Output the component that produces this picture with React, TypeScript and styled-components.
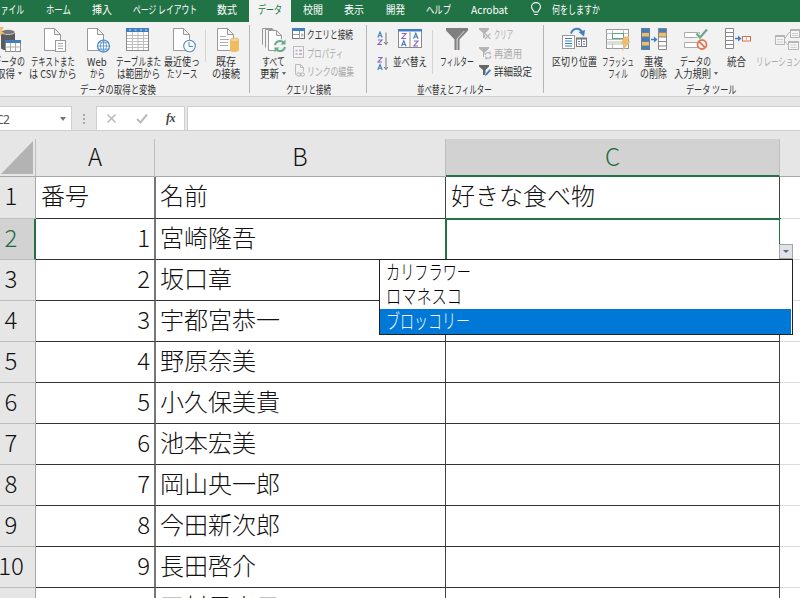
import React, { useLayoutEffect, useRef, useState } from "react";
import styled, { createGlobalStyle, css } from "styled-components";

const uiFont = `"Noto Sans CJK JP", "Noto Sans", sans-serif`;

const GlobalStyle = createGlobalStyle`
  *, *::before, *::after { box-sizing: border-box; }
  body { margin: 0; background: #e6e6e6; font-family: ${uiFont}; overflow: hidden; }
`;

/* ---------- condensed text ---------- */

const FitBox = styled.span<{ $w: number }>`
  display: block;
  flex: none;
  width: ${(p) => p.$w}px;
  white-space: nowrap;
  text-align: left;
`;

const FitInner = styled.span`
  display: inline-block;
  transform-origin: 0 50%;
`;

function Fit({ text, w }: { text: string; w: number }) {
  const ref = useRef<HTMLSpanElement>(null);
  const [scale, setScale] = useState(1);
  useLayoutEffect(() => {
    if (ref.current) setScale(w / ref.current.offsetWidth);
  }, [text, w]);
  return (
    <FitBox $w={w}>
      <FitInner ref={ref} style={{ transform: `scaleX(${scale})` }}>
        {text}
      </FitInner>
    </FitBox>
  );
}

/* ---------- window shell ---------- */

const Window = styled.div`
  width: 800px;
  height: 598px;
  overflow: hidden;
  display: flex;
  flex-direction: column;
  background: #e6e6e6;
`;

const TabBar = styled.nav`
  display: flex;
  flex: none;
  height: 22px;
  background: #217346;
`;

const Tab = styled.div<{ $w: number; $active?: boolean; $shift?: number }>`
  flex: none;
  display: flex;
  justify-content: center;
  align-items: center;
  width: ${(p) => p.$w}px;
  height: 22px;
  padding-bottom: 5px;
  margin-left: ${(p) => p.$shift ?? 0}px;
  font-size: 11px;
  line-height: 16px;
  color: ${(p) => (p.$active ? "#217346" : "#fff")};
  background: ${(p) => (p.$active ? "#f2f2f2" : "transparent")};
`;

const TellMe = styled.div`
  display: flex;
  gap: 10px;
  padding: 0 0 5px 10px;
  align-items: center;
  font-size: 11px;
  line-height: 16px;
  color: #fff;
`;

const Ribbon = styled.div`
  display: flex;
  flex: none;
  height: 75px;
  background: #f2f2f2;
  border-bottom: 1px solid #cfcfcf;
  overflow: hidden;
`;

const Group = styled.section<{ $w: number }>`
  flex: none;
  display: flex;
  flex-direction: column;
  width: ${(p) => p.$w}px;
`;

const GroupBody = styled.div<{ $pad?: number }>`
  display: flex;
  height: 60px;
  padding-left: ${(p) => p.$pad ?? 0}px;
`;

const GroupLabel = styled.div<{ $inset?: number }>`
  display: flex;
  justify-content: center;
  padding-right: ${(p) => p.$inset ?? 0}px;
  font-size: 11px;
  line-height: 14px;
  color: #333;
`;

const GroupRule = styled.div`
  flex: none;
  width: 1px;
  height: 68px;
  margin-top: 3px;
  background: #b5b5b5;
`;

const InnerRule = styled.div<{ $h: number }>`
  flex: none;
  width: 1px;
  height: ${(p) => p.$h}px;
  margin: 8px 1px 0;
  background: #d4d4d4;
`;

const BigButton = styled.div<{ $w: number; $shift?: number; $muted?: boolean }>`
  flex: none;
  display: flex;
  flex-direction: column;
  align-items: center;
  width: ${(p) => p.$w}px;
  margin-left: ${(p) => p.$shift ?? 0}px;
  padding-top: 5px;
  font-size: 11px;
  line-height: 12px;
  color: ${(p) => (p.$muted ? "#aaa" : "#333")};
`;

const IconSlot = styled.div<{ $dx?: number }>`
  width: 28px;
  height: 28px;
  margin-left: ${(p) => (p.$dx ?? 0) * 2}px;
  svg { display: block; overflow: visible; }
`;

const CaptionLine = styled.div`
  display: flex;
  align-items: center;
  height: 12px;
`;

const Caret = styled.i<{ $color?: string }>`
  margin-left: 3px;
  border: 2.5px solid transparent;
  border-top: 3px solid ${(p) => p.$color ?? "#666"};
  border-bottom: 0;
`;

const SmallList = styled.div`
  display: flex;
  flex-direction: column;
  padding-top: 3px;
`;

const SmallButton = styled.div<{ $muted?: boolean }>`
  display: flex;
  align-items: center;
  gap: 1px;
  height: 18.5px;
  font-size: 11px;
  line-height: 14px;
  color: ${(p) => (p.$muted ? "#aaa" : "#333")};
  svg { flex: none; display: block; }
`;

const SortColumn = styled.div`
  display: flex;
  flex-direction: column;
  gap: 10px;
  width: 22px;
  padding: 9px 0 0 10px;
  svg { display: block; }
`;

/* ---------- ribbon icons (28 x 28 canvas) ---------- */

const I = ({ children }: { children: React.ReactNode }) => (
  <svg width="28" height="28" viewBox="0 0 28 28" fill="none">
    {children}
  </svg>
);

const Page = ({ x = 3.5 }: { x?: number }) => (
  <path d={`M${x} 1.5h10l6 6v16h-16z M${x + 10} 1.5v6h6`} fill="#fff" stroke="#999" />
);

const GetDataIcon = () => (
  <I>
    <path d="M6 5v16c0 3 14 3 14 0V5z" fill="#5b5b5b" />
    <ellipse cx="13" cy="5" rx="7" ry="2.5" fill="#777" stroke="#f2f2f2" strokeWidth=".7" />
    <path d="M1 0h8l-3 5h3l-9 9 2-7h-3z" fill="#f0bd6c" />
    <rect x="10.5" y="13.5" width="15" height="11" fill="#fff" stroke="#8a8a8a" />
    <path d="M10 13h16v3H10z" fill="#3f7fc1" />
    <path d="M10 20h16M15.5 16v9M20.5 16v9" stroke="#aaa" />
  </I>
);
const TextIcon = () => (
  <I>
    <Page />
    <rect x="14.5" y="13.5" width="10" height="11" fill="#fff" stroke="#999" />
    <path d="M17 16.5h5M17 19h5M17 21.500h5" stroke="#aaa" />
  </I>
);
const WebIcon = () => (
  <I>
    <Page />
    <circle cx="19.5" cy="19" r="6" fill="#fff" stroke="#4f8ac6" strokeWidth="1.2" />
    <path d="M13.5 19h12M19.5 13v12M14.5 15.800h10M14.500 22.200h10M19.500 13c-4 3-4 9 0 12M19.500 13c4 3 4 9 0 12" stroke="#4f8ac6" strokeWidth=".8" />
  </I>
);
const TableIcon = () => (
  <I>
    <rect x="2.5" y="1.5" width="22" height="22" fill="#fff" stroke="#8a8a8a" />
    <path d="M2 1h23v4H2z" fill="#3f7fc1" />
    <path d="M5 3h2M10.500 3h2M16 3h2M21 3h2" stroke="#cfe0f2" />
    <path d="M8.500 5v18M14 5v18M19.500 5v18M3 8.500h21M3 11.500h21M3 14.500h21M3 17.500h21M3 20.500h21" stroke="#bdbdbd" />
  </I>
);
const RecentIcon = () => (
  <I>
    <Page />
    <circle cx="19.500" cy="19" r="5.800" fill="#fff" stroke="#4f8ac6" strokeWidth="1.100" />
    <path d="M19 15v4.500h4" stroke="#4f8ac6" />
  </I>
);
const ExistingIcon = () => (
  <I>
    <Page />
    <path d="M6 9.500h6M6 12.500h9M6 15.500h8M6 18.500h8" stroke="#aaa" />
    <path d="M16 13v10c0 2.500 9 2.500 9 0V13z" fill="#efbc62" />
    <ellipse cx="20.500" cy="13" rx="4.500" ry="2" fill="#f6d192" stroke="#e0a84a" strokeWidth=".6" />
  </I>
);
const RefreshIcon = () => (
  <I>
    <path d="M2.500 17.500v-16h10" stroke="#999" />
    <path d="M5.500 20.500v-18h8" stroke="#999" />
    <path d="M8.500 3.500h8l5 5v15h-13z M16.500 3.500v5h5" fill="#fff" stroke="#999" />
    <circle cx="20" cy="19" r="7" fill="#f2f2f2" />
    <path d="M15 18a5 5 0 0 1 8.500-2.500M25 20a5 5 0 0 1-8.500 2.500" stroke="#6aab8b" strokeWidth="2" />
    <path d="M25.500 12.500v5h-5zM14.500 25.500v-5h5z" fill="#6aab8b" />
  </I>
);
const SortDialogIcon = () => (
  <I>
    <rect x="2.500" y="2.500" width="23" height="18" fill="#fff" stroke="#8a8a8a" />
    <path d="M2 2h24v2.500H2z" fill="#3f7fc1" />
    <path d="M14 5v16" stroke="#8a8a8a" />
    <path d="M5.800 6.500h4.200l-4.200 5h4.200M17.800 14h4.200l-4.200 5h4.200" stroke="#8c62b5" strokeWidth="1.100" />
    <path d="M5.500 19.300l2.300-5.500 2.300 5.500M6.300 17.500h3M17.500 11.800l2.300-5.500 2.300 5.500M18.300 10h3" stroke="#3f7fc1" strokeWidth="1.100" />
  </I>
);
const FunnelIcon = () => (
  <I>
    <path d="M3 1h22v2.500l-8.500 9V23h-5V12.500L3 3.500z" fill="#7f7f7f" />
    <path d="M13.500 12v11h1.300V12l7-8h-1z" fill="#cfcfcf" />
  </I>
);
const TextToColumnsIcon = () => (
  <I>
    <path d="M10 6.500C12 .5 19 .5 21 5" stroke="#3f7fc1" strokeWidth="2" />
    <path d="M17.500 5l6.500-2-1 6.500z" fill="#3f7fc1" />
    <rect x="1.500" y="8.500" width="12" height="13" fill="#fff" stroke="#999" />
    <path d="M4 11.500h7M4 14h7M4 16.500h7M4 19h7" stroke="#3f7fc1" />
    <rect x="15.500" y="11.500" width="10" height="8" fill="#fff" stroke="#777" />
    <path d="M15 11.500h11" stroke="#777" strokeWidth="2" />
    <path d="M20.500 12v7" stroke="#777" />
    <path d="M17 14.500h2M17 17h2M22 14.500h2M22 17h2" stroke="#3f7fc1" />
  </I>
);
const FlashFillIcon = () => (
  <I>
    <rect x="2.500" y="2.500" width="22" height="19" fill="#fff" stroke="#999" />
    <path d="M2.500 6.500h22M2.500 12.500h22M2.500 17h22M8.500 2.500v4M19.500 2.500v19M8.500 17v4.500" stroke="#bbb" />
    <rect x="8.500" y="6.500" width="11" height="5" fill="#fff" stroke="#5aa583" />
    <path d="M3.500 14h15v2.500h-15z" fill="#ddd" />
    <path d="M20 9.500h5.500l-2 5h3l-8.500 10 2.500-7.500h-3.500z" fill="#f0bd6c" />
  </I>
);
const DuplicatesIcon = () => (
  <I>
    <path d="M1 1h9v22H1zM18 1h9v5h-9z" fill="#3f7fc1" />
    <path d="M2 6h7v4H2zM2 15h7v4H2zM19 6h7v4h-7z" fill="#f0bd6c" />
    <path d="M1.500 1.500h8v21h-8zM1.500 5.500h8M1.500 10h8M1.500 14.500h8M1.500 19h8" stroke="#6b7d93" />
    <path d="M18.500 10.500h8v12h-8z" fill="#fff" />
    <path d="M18.500 1.500h8v21h-8zM18.500 5.500h8M18.500 10h8M18.500 14.500h8M18.500 19h8" stroke="#888" />
    <path d="M11 12.500h4" stroke="#3f7fc1" strokeWidth="1.500" />
    <path d="M14 9.500l3.500 3-3.500 3z" fill="#3f7fc1" />
  </I>
);
const ValidationIcon = () => (
  <I>
    <path d="M2.500 5.500h15v5h-15zM2.500 15.500h15v5h-15z" fill="#fff" stroke="#aaa" />
    <path d="M14.500 6.500l3.500 4L25 2.500" stroke="#f2f2f2" strokeWidth="4" />
    <path d="M14.500 6.500l3.500 4L25 2.500" stroke="#6aab8b" strokeWidth="2.200" />
    <circle cx="20" cy="17.500" r="4.500" fill="#fff" stroke="#e07a55" strokeWidth="1.800" />
    <path d="M17 14.500l6 6" stroke="#e07a55" strokeWidth="1.800" />
  </I>
);
const ConsolidateIcon = () => (
  <I>
    <path d="M1.500 1.500h8v20h-8zM1.500 5.500h8M1.500 9.500h8M1.500 13.500h8M1.500 17.500h8" fill="#fff" stroke="#888" />
    <path d="M11 11.500h4" stroke="#3f7fc1" strokeWidth="1.500" />
    <path d="M14 8.500l3.500 3-3.500 3z" fill="#3f7fc1" />
    <rect x="18.500" y="9.500" width="8" height="4.500" fill="#fff" stroke="#dc6a43" />
    <path d="M22.500 10v4" stroke="#ecae98" />
  </I>
);
const RelationsIcon = () => (
  <I>
    <path d="M10 12.500l5-7h3M10 13.500l5 5.500h3" stroke="#b5b5b5" />
    <path d="M1.500 8.500h9v9h-9zM16.500 2.500h9v8h-9zM14.500 14.500h10v8h-10z" fill="#f4f4f4" stroke="#b5b5b5" />
    <path d="M1 9h10M16 3h10M14 15h11" stroke="#b5b5b5" strokeWidth="2" />
    <path d="M3 12.500h6M3 15h6M18 6.500h6M18 8.500h6M16.500 18h6M16.500 20.500h6" stroke="#cfcfcf" />
  </I>
);

/* ---------- small icons (14 x 14 canvas) ---------- */

const S = ({ children }: { children: React.ReactNode }) => (
  <svg width="14" height="14" viewBox="0 0 14 14" fill="none">
    {children}
  </svg>
);
const QueriesIcon = () => (
  <S>
    <rect x=".5" y="1.500" width="12" height="10" fill="#fff" stroke="#777" />
    <path d="M0 1h13v3H0z" fill="#3f7fc1" />
    <path d="M7.500 4v8M1 7.500h6" stroke="#999" />
    <path d="M9 6.500h2.500v3H9z" fill="#bbb" />
  </S>
);
const PropertiesIcon = () => (
  <S>
    <rect x="1.500" y=".5" width="10" height="11" fill="#f6f2f6" stroke="#bbb" />
    <path d="M3.500 4.500h2M3.500 8h2M7 4.500h3M7 8h3" stroke="#b5a5b5" strokeWidth="1.500" />
  </S>
);
const LinksIcon = () => (
  <S>
    <path d="M3.500 10.500v-10h5l3 3v4M8.500 .5v3h3" stroke="#bbb" />
    <ellipse cx="6.800" cy="10.500" rx="2.200" ry="1.600" stroke="#b5b0b5" />
    <ellipse cx="10.300" cy="10.500" rx="2.200" ry="1.600" stroke="#b5b0b5" />
  </S>
);
const smallFunnel = "M0 1h10v1.500L6.500 6v5H4V6L0 2.500z";
const ClearIcon = () => (
  <S>
    <path d={smallFunnel} fill="#b5b5b5" />
    <path d="M6 6.500l5.500 5.500M11.500 6.500L6 12" stroke="#f2f2f2" strokeWidth="2.500" />
    <path d="M6 6.500l5.500 5.500M11.500 6.500L6 12" stroke="#b5b5b5" strokeWidth="1.200" />
  </S>
);
const ReapplyIcon = () => (
  <S>
    <path d={smallFunnel} fill="#b5b5b5" />
    <circle cx="9" cy="9.500" r="4" fill="#f2f2f2" />
    <path d="M6 9a3 3 0 0 1 5-1.500V5.500M12 10a3 3 0 0 1-5 1.500v2" stroke="#b5b5b5" strokeWidth="1.200" />
  </S>
);
const AdvancedIcon = () => (
  <S>
    <path d={smallFunnel} fill="#666" />
    <path d="M5.500 12.500l1-3 4-4.500 1.800 1.600-4 4.500z" fill="#3f7fc1" stroke="#f2f2f2" strokeWidth=".5" />
  </S>
);
const SortIcon = ({ desc }: { desc?: boolean }) => (
  <svg width="12" height="15" viewBox="0 0 12 15" fill="none">
    <path d={desc ? "M.8 14l2.200-5.500L5.200 14M1.600 12.200h3" : "M.8 6.500L3 1l2.200 5.500M1.600 4.700h3"} stroke="#3f7fc1" strokeWidth="1.100" />
    <path d={desc ? "M1 1.500h4l-4 4.500h4" : "M1 9h4l-4 4.500h4"} stroke="#8c62b5" strokeWidth="1.100" />
    <path d="M9 1.500v12M7 11l2 2.500 2-2.500" stroke="#777" />
  </svg>
);
const BulbIcon = () => (
  <svg width="12" height="14" viewBox="0 0 12 14" fill="none" stroke="#fff" strokeWidth="1.100">
    <path d="M4 10c0-2-2.500-2.500-2.500-5.200a4.500 4.200 0 0 1 9 0C10.500 7.500 8 8 8 10zM4.300 12.500h3.400" />
  </svg>
);

/* ---------- formula bar ---------- */

const FormulaBar = styled.div`
  display: flex;
  flex: none;
  height: 34px;
  padding: 9px 0 0;
  border-bottom: 1px solid #d0d0d0;
`;

const BarBox = styled.div<{ $w: number; $ml?: number }>`
  flex: none;
  display: flex;
  align-items: center;
  width: ${(p) => p.$w}px;
  height: 25px;
  margin-left: ${(p) => p.$ml ?? 0}px;
  background: #fff;
  border: 1px solid #cfcfcf;
`;

const NameText = styled.span`
  flex: 1;
  margin: 2px 0 0 -4px;
  font: 12px "Noto Sans", sans-serif;
  line-height: 16px;
  letter-spacing: -0.5px;
  color: #555;
`;

const NameCaret = styled(Caret)`
  margin: 0 5px 0 0;
  border-width: 4px 3.5px 0;
`;

const Grip = styled.div`
  flex: none;
  width: 24px;
  display: flex;
  flex-direction: column;
  align-items: center;
  gap: 2px;
  padding-top: 8px;
`;

const GripDot = styled.i`
  width: 1.5px;
  height: 2px;
  background: #aaa;
`;

const BarTools = styled(BarBox)`
  justify-content: space-between;
  padding: 0 9px;
  color: #444;
`;

const Fx = styled.span`
  font: italic bold 12px "Liberation Serif", serif;
  letter-spacing: -0.5px;
`;

/* ---------- worksheet ---------- */

const COLS = { row: 36, a: 120, b: 290, c: 334 };

const Sheet = styled.main`
  position: relative;
  flex: 1;
  margin-top: 1px;
`;

const Row = styled.div`
  display: flex;
  width: 860px;
`;

const ColumnRow = styled(Row)`
  height: 45px;
  padding-top: 7px;
  border-bottom: 1px solid #a8a8a8;
`;

const ColumnHead = styled.div<{ $w: number; $selected?: boolean }>`
  flex: none;
  display: flex;
  align-items: center;
  justify-content: center;
  width: ${(p) => p.$w}px;
  height: 38px;
  margin-bottom: -1px;
  padding-bottom: 5px;
  font-size: 24px;
  font-weight: 300;
  line-height: 30px;
  color: #111;
  border-right: 1px solid #bdbdbd;
  ${(p) =>
    p.$selected &&
    css`
      padding-bottom: 3px;
      color: #1d6a40;
      background: #d2d2d2;
      border-bottom: 2px solid #217346;
    `}
`;

const Corner = styled.div`
  flex: none;
  display: flex;
  align-items: flex-end;
  justify-content: flex-end;
  width: ${COLS.row}px;
  padding: 0 2px 2px 0;
  border-right: 1px solid #bdbdbd;
`;

const CornerMark = styled.i`
  width: 32px;
  height: 33px;
  background: #b3b3b3;
  clip-path: polygon(100% 0, 100% 100%, 0 100%);
`;

const RowHead = styled.div<{ $selected?: boolean }>`
  flex: none;
  display: flex;
  justify-content: center;
  width: ${COLS.row}px;
  padding-right: ${(p) => (p.$selected ? 12 : 13)}px;
  font-size: 24px;
  font-weight: 300;
  line-height: 36px;
  color: ${(p) => (p.$selected ? "#1d6a40" : "#111")};
  background: ${(p) => (p.$selected ? "#d2d2d2" : "#e6e6e6")};
  border-right: ${(p) => (p.$selected ? "2px solid #217346" : "1px solid #a8a8a8")};
  border-bottom: 1px solid #bdbdbd;
`;

const Cell = styled.div<{ $w: number; $tall?: boolean; $blank?: boolean; $selected?: boolean }>`
  flex: none;
  width: ${(p) => p.$w}px;
  height: ${(p) => (p.$tall ? 42 : 41)}px;
  padding: 0 5px;
  overflow: hidden;
  white-space: nowrap;
  font-size: 24px;
  font-weight: 300;
  line-height: 36px;
  color: #111;
  background: #fff;
  border-right: 1px solid ${(p) => (p.$blank ? "#dcdcdc" : "#444")};
  border-bottom: 1px solid ${(p) => (p.$blank ? "#dcdcdc" : "#333")};
  ${(p) =>
    p.$selected &&
    css`
      outline: 2px solid #217346;
      outline-offset: -1px;
    `}
`;

const IndexCell = styled(Cell)<{ $right?: boolean }>`
  padding-right: 4px;
  text-align: ${(p) => (p.$right ? "right" : "left")};
  border-right: 2px solid #777;
`;

const NameCell = styled(Cell)`
  padding-left: 4px;
`;

const ListToggle = styled.button`
  position: absolute;
  left: 779px;
  top: 112px;
  display: flex;
  align-items: center;
  justify-content: center;
  width: 14px;
  height: 15px;
  padding: 0;
  background: #dfe3ea;
  border: 1px solid #a5a5a5;
`;

const ToggleCaret = styled(Caret)`
  margin: 0;
  border-width: 3.5px 3px 0;
`;

const ChoiceList = styled.ul`
  position: absolute;
  left: 379px;
  top: 127px;
  width: 414px;
  height: 76px;
  margin: 0;
  padding: 0 1px 0 0;
  list-style: none;
  background: #fff;
  border: 1px solid #222;
`;

const Choice = styled.li<{ $active?: boolean }>`
  display: flex;
  align-items: center;
  height: 24.66px;
  padding: 0 0 1px 6px;
  font-size: 20px;
  line-height: 22px;
  font-weight: 300;
  color: ${(p) => (p.$active ? "#fff" : "#000")};
  background: ${(p) => (p.$active ? "#0078d7" : "#fff")};
`;

/* ---------- data ---------- */

const tabs: { label: string; w: number; text: number; active?: boolean; shift?: number }[] = [
  { label: "ファイル", w: 41, text: 31, shift: -12 },
  { label: "ホーム", w: 58, text: 25 },
  { label: "挿入", w: 29, text: 20 },
  { label: "ページ レイアウト", w: 97, text: 64 },
  { label: "数式", w: 28, text: 20 },
  { label: "データ", w: 42, text: 24, active: true, shift: 8 },
  { label: "校閲", w: 43, text: 20 },
  { label: "表示", w: 39, text: 20 },
  { label: "開発", w: 44, text: 19 },
  { label: "ヘルプ", w: 42, text: 25 },
  { label: "Acrobat", w: 61, text: 37 },
];

const people = ["宮崎隆吾", "坂口章", "宇都宮恭一", "野原奈美", "小久保美貴", "池本宏美", "岡山央一郎", "今田新次郎", "長田啓介", "田村早実子"];

const choices = [
  { label: "カリフラワー", w: 85 },
  { label: "ロマネスコ", w: 76 },
  { label: "ブロッコリー", w: 84 },
];

type BigProps = {
  w: number;
  icon: React.ReactNode;
  lines: [string, number][];
  dx?: number;
  shift?: number;
  caret?: boolean;
  muted?: boolean;
};

function Big({ w, icon, lines, dx, shift, caret, muted }: BigProps) {
  return (
    <BigButton $w={w} $shift={shift} $muted={muted}>
      <IconSlot $dx={dx}>{icon}</IconSlot>
      {lines.map(([text, tw], i) => (
        <CaptionLine key={text}>
          <Fit text={text} w={tw} />
          {caret && i === lines.length - 1 && <Caret />}
        </CaptionLine>
      ))}
    </BigButton>
  );
}

function Small({ icon, text, w, muted }: { icon: React.ReactNode; text: string; w: number; muted?: boolean }) {
  return (
    <SmallButton $muted={muted}>
      {icon}
      <Fit text={text} w={w} />
    </SmallButton>
  );
}

export default function App() {
  return (
    <>
      <GlobalStyle />
      <Window>
        <TabBar>
          {tabs.map((t) => (
            <Tab key={t.label} $w={t.w} $active={t.active} $shift={t.shift}>
              <Fit text={t.label} w={t.text} />
            </Tab>
          ))}
          <TellMe>
            <BulbIcon />
            <Fit text="何をしますか" w={48} />
          </TellMe>
        </TabBar>

        <Ribbon>
          <Group $w={249}>
            <GroupBody>
              <Big w={39} shift={-11} icon={<GetDataIcon />} lines={[["データの", 32], ["取得", 19]]} caret />
              <Big w={50} dx={2} icon={<TextIcon />} lines={[["テキストまた", 44], ["は CSV から", 48]]} />
              <Big w={38} dx={1} icon={<WebIcon />} lines={[["Web", 20], ["から", 15]]} />
              <Big w={44} icon={<TableIcon />} lines={[["テーブルまた", 45], ["は範囲から", 43]]} />
              <Big w={44} dx={2} icon={<RecentIcon />} lines={[["最近使っ", 36], ["たソース", 30]]} />
              <InnerRule $h={32} />
              <Big w={38} dx={2} icon={<ExistingIcon />} lines={[["既存", 20], ["の接続", 28]]} />
            </GroupBody>
            <GroupLabel $inset={14}>
              <Fit text="データの取得と変換" w={76} />
            </GroupLabel>
          </Group>
          <GroupRule />
          <Group $w={116}>
            <GroupBody $pad={4}>
              <Big w={38} dx={1} icon={<RefreshIcon />} lines={[["すべて", 23], ["更新", 19]]} caret />
              <SmallList>
                <Small icon={<QueriesIcon />} text="クエリと接続" w={46} />
                <Small icon={<PropertiesIcon />} text="プロパティ" w={36} muted />
                <Small icon={<LinksIcon />} text="リンクの編集" w={47} muted />
              </SmallList>
            </GroupBody>
            <GroupLabel>
              <Fit text="クエリと接続" w={45} />
            </GroupLabel>
          </Group>
          <GroupRule />
          <Group $w={176}>
            <GroupBody>
              <SortColumn>
                <SortIcon />
                <SortIcon desc />
              </SortColumn>
              <Big w={42} icon={<SortDialogIcon />} lines={[["並べ替え", 34]]} />
              <InnerRule $h={44} />
              <Big w={45} icon={<FunnelIcon />} lines={[["フィルター", 34]]} />
              <SmallList>
                <Small icon={<ClearIcon />} text="クリア" w={19} muted />
                <Small icon={<ReapplyIcon />} text="再適用" w={28} muted />
                <Small icon={<AdvancedIcon />} text="詳細設定" w={38} />
              </SmallList>
            </GroupBody>
            <GroupLabel $inset={2}>
              <Fit text="並べ替えとフィルター" w={75} />
            </GroupLabel>
          </Group>
          <GroupRule />
          <Group $w={334}>
            <GroupBody $pad={6}>
              <Big w={49} icon={<TextToColumnsIcon />} lines={[["区切り位置", 45]]} />
              <Big w={38} icon={<FlashFillIcon />} lines={[["フラッシュ", 32], ["フィル", 20]]} />
              <Big w={33} icon={<DuplicatesIcon />} lines={[["重複", 19], ["の削除", 27]]} />
              <Big w={51} icon={<ValidationIcon />} lines={[["データの", 31], ["入力規則", 37]]} caret />
              <Big w={31} dx={1} icon={<ConsolidateIcon />} lines={[["統合", 19]]} />
              <Big w={74} dx={-1} icon={<RelationsIcon />} lines={[["リレーションシップ", 67]]} muted />
            </GroupBody>
            <GroupLabel>
              <Fit text="データ ツール" w={50} />
            </GroupLabel>
          </Group>
        </Ribbon>

        <FormulaBar>
          <BarBox $w={73} $ml={-1}>
            <NameText>C2</NameText>
            <NameCaret $color="#777" />
          </BarBox>
          <Grip>
            <GripDot />
            <GripDot />
            <GripDot />
          </Grip>
          <BarTools $w={89}>
            <svg width="11" height="11" viewBox="0 0 11 11" stroke="#bbb" strokeWidth="1.600">
              <path d="M1.500 1.500l8 8M9.500 1.500l-8 8" />
            </svg>
            <svg width="12" height="11" viewBox="0 0 12 11" fill="none" stroke="#bbb" strokeWidth="2">
              <path d="M1 6l3.500 3.500L11 1.500" />
            </svg>
            <Fx>fx</Fx>
          </BarTools>
          <BarBox $w={640} $ml={2} />
        </FormulaBar>

        <Sheet>
          <ColumnRow>
            <Corner>
              <CornerMark />
            </Corner>
            <ColumnHead $w={COLS.a - 1}>A</ColumnHead>
            <ColumnHead $w={COLS.b + 1}>B</ColumnHead>
            <ColumnHead $w={COLS.c} $selected>
              C
            </ColumnHead>
          </ColumnRow>
          <Row>
            <RowHead>1</RowHead>
            <IndexCell $w={COLS.a} $tall>番号</IndexCell>
            <NameCell $w={COLS.b} $tall>名前</NameCell>
            <Cell $w={COLS.c} $tall>好きな食べ物</Cell>
            <Cell $w={80} $tall $blank />
          </Row>
          {people.map((name, i) => (
            <Row key={name}>
              <RowHead $selected={i === 0}>{i + 2}</RowHead>
              <IndexCell $w={COLS.a} $right>
                {i + 1}
              </IndexCell>
              <NameCell $w={COLS.b}>{name}</NameCell>
              <Cell $w={COLS.c} $selected={i === 0} />
              <Cell $w={80} $blank />
            </Row>
          ))}
          <ListToggle aria-label="リストを開く">
            <ToggleCaret />
          </ListToggle>
          <ChoiceList>
            {choices.map((c, i) => (
              <Choice key={c.label} $active={i === 2}>
                <Fit text={c.label} w={c.w} />
              </Choice>
            ))}
          </ChoiceList>
        </Sheet>
      </Window>
    </>
  );
}
